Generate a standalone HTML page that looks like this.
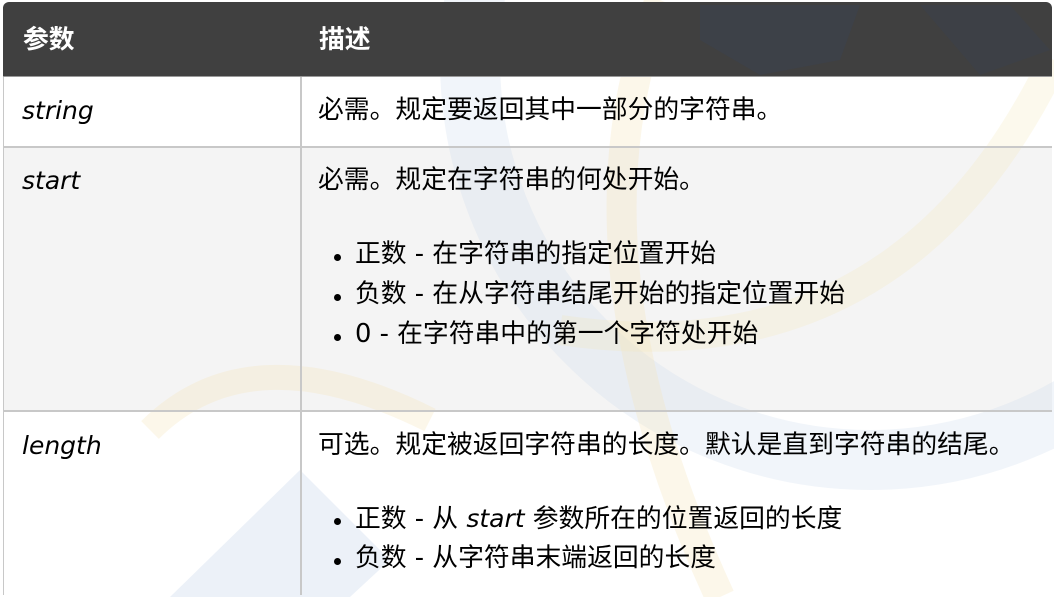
<!DOCTYPE html>
<html><head><meta charset="utf-8"><style>
*{margin:0;padding:0;box-sizing:border-box}
body{width:1054px;height:597px;background:#fff;position:relative;overflow:hidden;font-family:"DejaVu Sans","Noto Sans CJK SC",sans-serif;font-size:25.8px;color:#000}
.a{position:absolute;white-space:nowrap;line-height:1}
i{font-style:oblique;font-size:25px}
.hd{position:absolute;left:3px;top:2px;width:1049px;height:75px;background:#404040;border-radius:6px 6px 0 0}
.h{color:#fff;font-weight:bold;font-size:25.8px}
.r2{position:absolute;left:3px;top:147px;width:1049px;height:264px;background:#f4f4f4}
.hl{position:absolute;left:3px;width:1049px;height:2px;background:#c8c8c8}
.vl{position:absolute;top:77px;width:2px;background:#c8c8c8}
.b{position:absolute;width:7px;height:7px;border-radius:50%;background:#000}
</style></head><body>
<div class="r2"></div>
<svg width="1054" height="597" style="position:absolute;left:0;top:0">
<circle cx="870" cy="60" r="400" fill="none" stroke="#c9d6ea" stroke-opacity="0.25" stroke-width="60"/>
<path d="M660 0 Q560 250 720 597" fill="none" stroke="#f5e6b8" stroke-opacity="0.3" stroke-width="30"/>
<path d="M1054 60 Q900 380 560 330" fill="none" stroke="#f5e6b8" stroke-opacity="0.25" stroke-width="30"/>
<path d="M170 597 L300 470 L390 560 L350 597Z" fill="#c9d6ea" fill-opacity="0.35"/>
<path d="M150 430 Q250 330 430 420" fill="none" stroke="#f5e6b8" stroke-opacity="0.3" stroke-width="25"/>
</svg>
<div class="hd"></div>
<svg width="1054" height="80" style="position:absolute;left:0;top:0">
<path d="M700 5 L860 5 L840 60 L760 75 L700 40Z" fill="#3a4250" fill-opacity="0.5"/>
<path d="M920 5 L1010 5 L1050 50 L980 75Z" fill="#3a4250" fill-opacity="0.4"/>
</svg>
<div class="hl" style="top:76px;height:1px;background:#999"></div>
<div class="hl" style="top:146px"></div>
<div class="hl" style="top:410px"></div>
<div class="vl" style="left:3px;height:518px;width:1px"></div>
<div class="vl" style="left:300px;height:518px"></div>
<div class="a h" style="left:23px;top:28px">参数</div>
<div class="a h" style="left:319px;top:28px">描述</div>
<div class="a" style="left:22px;top:98px"><i>string</i></div>
<div class="a" style="left:318px;top:98px">必需。规定要返回其中一部分的字符串。</div>
<div class="a" style="left:22px;top:168px"><i>start</i></div>
<div class="a" style="left:318px;top:168px">必需。规定在字符串的何处开始。</div>
<div class="b" style="left:334px;top:254px"></div>
<div class="a" style="left:355px;top:242px">正数 - 在字符串的指定位置开始</div>
<div class="b" style="left:334px;top:294px"></div>
<div class="a" style="left:355px;top:282px">负数 - 在从字符串结尾开始的指定位置开始</div>
<div class="b" style="left:334px;top:334px"></div>
<div class="a" style="left:355px;top:322px">0 - 在字符串中的第一个字符处开始</div>
<div class="a" style="left:22px;top:433px"><i>length</i></div>
<div class="a" style="left:318px;top:433px">可选。规定被返回字符串的长度。默认是直到字符串的结尾。</div>
<div class="b" style="left:334px;top:518px"></div>
<div class="a" style="left:355px;top:506px">正数 - 从 <i>start</i> 参数所在的位置返回的长度</div>
<div class="b" style="left:334px;top:558px"></div>
<div class="a" style="left:355px;top:546px">负数 - 从字符串末端返回的长度</div>
</body></html>
